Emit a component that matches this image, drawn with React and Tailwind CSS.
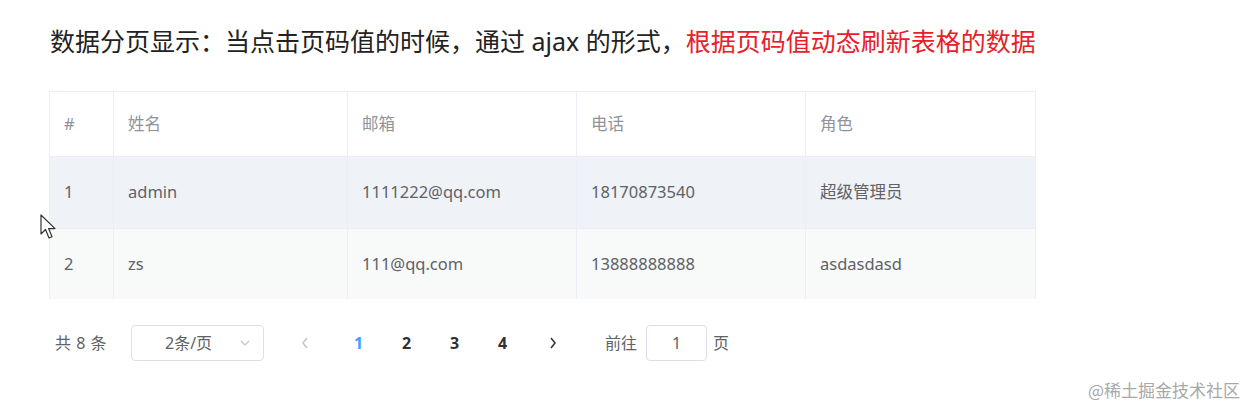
import React from 'react';

const cols = ['#', '姓名', '邮箱', '电话', '角色'];

const rows = [
  { id: '1', name: 'admin', email: '1111222@qq.com', phone: '18170873540', role: '超级管理员', bg: 'bg-[#eff3f8]', h: 'h-[72px]' },
  { id: '2', name: 'zs', email: '111@qq.com', phone: '13888888888', role: 'asdasdasd', bg: 'bg-[#f8f9f9]', h: 'h-[70px]' },
];

const Cursor = () => (
  <svg width="18" height="26" viewBox="0 0 18 26" className="absolute left-[40px] top-[214px]">
    <path d="M1 1 L1 20 L5.5 15.5 L9 24 L12 22.8 L8.6 14.6 L15 14.6 Z" fill="#fff" stroke="#333" strokeWidth="1.2" strokeLinejoin="round" />
  </svg>
);

const Cell = ({ children, last, head }) => (
  <div className={`flex items-center pl-[14px] border-[#ebeef5] ${last ? '' : 'border-r'} ${head ? 'text-[#909399]' : 'text-[#606266]'}`}>
    {children}
  </div>
);

export default function App() {
  return (
    <div className="relative w-[1246px] h-[407px] bg-white overflow-hidden" style={{ fontFamily: '"Noto Sans", "Noto Sans CJK SC", sans-serif' }}>
      <div className="pl-[50px] pt-[25px] text-[25px] leading-[32px] text-[#222]">
        数据分页显示：当点击页码值的时候，通过 ajax 的形式，<span className="text-[#e8202a]">根据页码值动态刷新表格的数据</span>
      </div>

      <div className="ml-[49px] mt-[34px] w-[987px] border-t border-l border-r border-[#ebeef5] text-[16.5px]">
        <div className="grid grid-cols-[64px_234px_229px_229px_231px] h-[65px] bg-white border-b border-[#ebeef5]">
          {cols.map((c, i) => (
            <Cell key={c} head last={i === cols.length - 1}>{c}</Cell>
          ))}
        </div>
        {rows.map((r, ri) => (
          <div key={r.id} className={`grid grid-cols-[64px_234px_229px_229px_231px] ${r.h} ${r.bg} ${ri === 0 ? 'border-b border-[#ebeef5]' : ''}`}>
            <Cell>{r.id}</Cell>
            <Cell>{r.name}</Cell>
            <Cell>{r.email}</Cell>
            <Cell>{r.phone}</Cell>
            <Cell last>{r.role}</Cell>
          </div>
        ))}
      </div>

      <div className="flex items-center ml-[55px] mt-[25px] h-[38px] text-[16px] text-[#606266]">
        <span className="w-[76px] tracking-[0.5px]">共 8 条</span>
        <div className="flex items-center justify-between w-[133px] h-[36px] border border-[#dcdfe6] rounded-[4px] pl-[33px] pr-[12px]">
          <span>2条/页</span>
          <svg width="12" height="12" viewBox="0 0 12 12">
            <path d="M2 4 L6 8 L10 4" fill="none" stroke="#c0c4cc" strokeWidth="1.2" />
          </svg>
        </div>
        <svg width="10" height="14" viewBox="0 0 10 14" className="ml-[36px]">
          <path d="M7 2 L3 7 L7 12" fill="none" stroke="#c0c4cc" strokeWidth="1.5" />
        </svg>
        <div className="flex items-center ml-[44px] font-bold text-[#303133]">
          <span className="w-[48px] text-[#409eff]">1</span>
          <span className="w-[48px]">2</span>
          <span className="w-[48px]">3</span>
          <span className="w-[45px]">4</span>
        </div>
        <svg width="10" height="14" viewBox="0 0 10 14" className="ml-[5px]">
          <path d="M3 2 L7 7 L3 12" fill="none" stroke="#303133" strokeWidth="1.5" />
        </svg>
        <span className="ml-[47px]">前往</span>
        <div className="flex items-center justify-center w-[61px] h-[36px] ml-[9px] border border-[#dcdfe6] rounded-[4px]">1</div>
        <span className="ml-[6px]">页</span>
      </div>

      <Cursor />

      <div className="absolute right-[6px] bottom-[5px] text-[17px] text-[#a8a8a8]" style={{ fontFamily: '"Noto Sans CJK SC", sans-serif' }}>
        @稀土掘金技术社区
      </div>
    </div>
  );
}
